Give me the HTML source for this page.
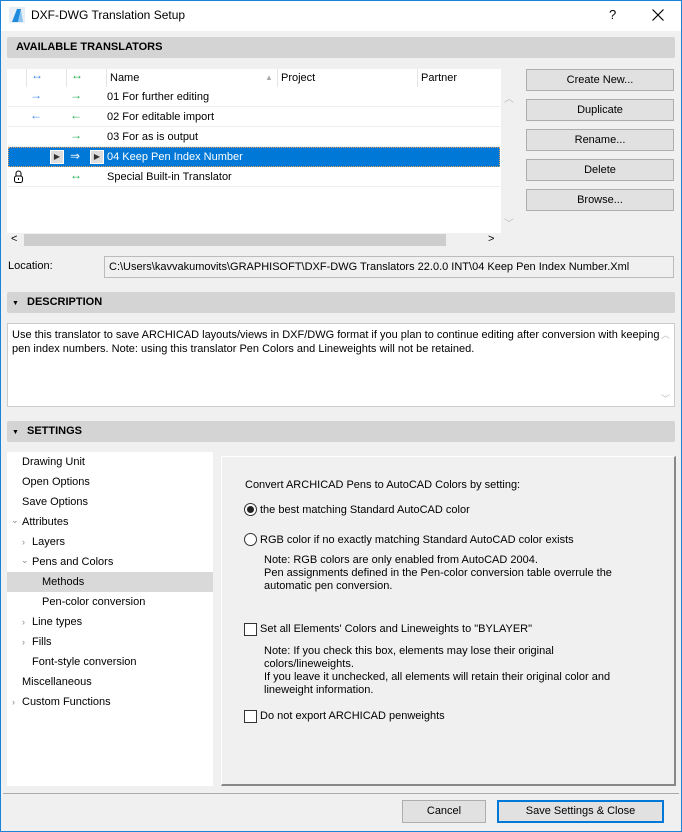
<!DOCTYPE html>
<html><head><style>
*{box-sizing:border-box;margin:0;padding:0}
body{width:682px;height:832px;overflow:hidden;background:#f0f0f0;font-family:"Liberation Sans",sans-serif;font-size:11px;color:#000;position:relative}
.a{position:absolute;white-space:nowrap}
.win{position:absolute;left:0;top:0;width:682px;height:832px;border:1px solid #1883d7}
.hdr{position:absolute;left:7px;width:668px;height:21px;background:#d4d4d4;border-radius:2px;font-weight:bold;font-size:11px;line-height:21px;padding-left:9px}
.btn{position:absolute;left:526px;width:148px;height:22px;background:#e1e1e1;border:1px solid #adadad;text-align:center;line-height:20px}
.row{position:absolute;left:8px;width:492px;height:20px;border-bottom:1px solid #eee;line-height:20px}
.bl{color:#3a86e8;position:absolute;font-size:12px;top:-2px}
.gr{color:#1faa4a;position:absolute;font-size:12px;top:-2px}
.tr{position:absolute;line-height:20px}
.ch{position:absolute;color:#888;font-size:9px;line-height:20px}
</style></head><body>
<div class="win"></div>
<div class="a" style="left:1px;top:1px;width:680px;height:30px;background:#fff"></div>
<svg class="a" style="left:9px;top:7px" width="16" height="16"><rect width="16" height="16" fill="#e8eef5"/><path d="M3 15 L8 2 L12 2 L9 15Z" fill="#1e8be0"/><path d="M9 15 L12 3 L14 15Z" fill="#8cc6f0"/></svg>
<div class="a" style="left:31px;top:8px;font-size:12px">DXF-DWG Translation Setup</div>
<div class="a" style="left:609px;top:7px;font-size:13px">?</div>
<svg class="a" style="left:652px;top:9px" width="12" height="12"><path d="M0.5 0.5L11.5 11.5M11.5 0.5L0.5 11.5" stroke="#000" stroke-width="1.2"/></svg>

<div class="hdr" style="top:37px">AVAILABLE TRANSLATORS</div>
<div class="a" style="left:7px;top:69px;width:494px;height:164px;background:#fff"></div>
<div class="a" style="left:26px;top:69px;width:1px;height:18px;background:#e5e5e5"></div>
<div class="a" style="left:66px;top:69px;width:1px;height:18px;background:#e5e5e5"></div>
<div class="a" style="left:106px;top:69px;width:1px;height:18px;background:#e5e5e5"></div>
<div class="a" style="left:277px;top:69px;width:1px;height:18px;background:#e5e5e5"></div>
<div class="a" style="left:417px;top:69px;width:1px;height:18px;background:#e5e5e5"></div>
<div class="bl" style="left:31px;top:68px">↔</div><div class="gr" style="left:71px;top:68px">↔</div>
<div class="a" style="left:110px;top:72px">Name</div><div class="a" style="left:265px;top:73px;color:#aaa;font-size:8px">▲</div>
<div class="a" style="left:281px;top:72px">Project</div><div class="a" style="left:421px;top:72px">Partner</div>
<div class="row" style="top:87px"><span class="bl" style="left:22px">→</span><span class="gr" style="left:62px">→</span><span class="tr" style="left:99px">01 For further editing</span></div>
<div class="row" style="top:107px"><span class="bl" style="left:22px">←</span><span class="gr" style="left:62px">←</span><span class="tr" style="left:99px">02 For editable import</span></div>
<div class="row" style="top:127px"><span class="gr" style="left:62px">→</span><span class="tr" style="left:99px">03 For as is output</span></div>
<div class="row" style="top:147px;background:#0078d7;color:#fff;border:1px dotted #e0a060">
<span style="position:absolute;left:41px;top:2px;width:14px;height:14px;background:#ddd;border:1px solid #fff;color:#333;font-size:8px;line-height:12px;text-align:center">▶</span>
<span style="position:absolute;left:61px;top:-2px;color:#fff;font-size:12px">⇒</span>
<span style="position:absolute;left:81px;top:2px;width:14px;height:14px;background:#ddd;border:1px solid #fff;color:#333;font-size:8px;line-height:12px;text-align:center">▶</span>
<span class="tr" style="left:98px;top:-1px">04 Keep Pen Index Number</span></div>
<div class="row" style="top:167px"><svg style="position:absolute;left:5px;top:3px" width="11" height="13"><path d="M3 6V3.5a2.5 2.5 0 0 1 5 0V6" fill="none" stroke="#000"/><rect x="1.5" y="6" width="8" height="6.5" rx="2" fill="#fff" stroke="#000"/><path d="M5.5 8v2" stroke="#000"/></svg><span class="gr" style="left:62px">↔</span><span class="tr" style="left:99px">Special Built-in Translator</span></div>
<div class="a" style="left:504px;top:90px;color:#bbb;font-size:10px">︿</div>
<div class="a" style="left:504px;top:215px;color:#bbb;font-size:10px">﹀</div>
<div class="a" style="left:24px;top:234px;width:422px;height:12px;background:#cdcdcd"></div>
<div class="a" style="left:11px;top:233px;font-size:11px">&lt;</div><div class="a" style="left:488px;top:233px;font-size:11px">&gt;</div>

<div class="btn" style="top:69px">Create New...</div>
<div class="btn" style="top:99px">Duplicate</div>
<div class="btn" style="top:129px">Rename...</div>
<div class="btn" style="top:159px">Delete</div>
<div class="btn" style="top:189px">Browse...</div>

<div class="a" style="left:8px;top:260px">Location:</div>
<div class="a" style="left:104px;top:256px;width:570px;height:22px;border:1px solid #bbb;background:#f0f0f0;padding-left:4px;line-height:20px">C:\Users\kavvakumovits\GRAPHISOFT\DXF-DWG Translators 22.0.0 INT\04 Keep Pen Index Number.Xml</div>

<div class="hdr" style="top:292px;padding-left:20px">DESCRIPTION</div>
<div class="a" style="left:12px;top:300px;font-size:7px">▼</div>
<div class="a" style="left:7px;top:323px;width:668px;height:84px;background:#fff;border:1px solid #ccc;padding:4px 4px;white-space:normal;line-height:14px">Use this translator to save ARCHICAD layouts/views in DXF/DWG format if you plan to continue editing after conversion with keeping pen index numbers. Note: using this translator Pen Colors and Lineweights will not be retained.</div>
<div class="a" style="left:661px;top:328px;color:#bbb;font-size:9px">︿</div>
<div class="a" style="left:661px;top:392px;color:#bbb;font-size:9px">﹀</div>

<div class="hdr" style="top:421px;padding-left:20px">SETTINGS</div>
<div class="a" style="left:12px;top:429px;font-size:7px">▼</div>
<div class="a" style="left:7px;top:452px;width:206px;height:334px;background:#fff"></div>
<div class="a" style="left:7px;top:572px;width:206px;height:20px;background:#d9d9d9"></div>
<div class="a" style="left:22px;top:452px;line-height:20px">Drawing Unit<br>Open Options<br>Save Options<br>Attributes</div>
<div class="a" style="left:32px;top:532px;line-height:20px">Layers<br>Pens and Colors</div>
<div class="a" style="left:42px;top:572px;line-height:20px">Methods<br>Pen-color conversion</div>
<div class="a" style="left:32px;top:612px;line-height:20px">Line types<br>Fills<br>Font-style conversion</div>
<div class="a" style="left:22px;top:672px;line-height:20px">Miscellaneous<br>Custom Functions</div>
<div class="ch" style="left:11px;top:510px">⌄</div>
<div class="ch" style="left:22px;top:532px">›</div>
<div class="ch" style="left:21px;top:550px">⌄</div>
<div class="ch" style="left:22px;top:612px">›</div>
<div class="ch" style="left:22px;top:632px">›</div>
<div class="ch" style="left:12px;top:692px">›</div>

<div class="a" style="left:221px;top:456px;width:455px;height:330px;border:1px solid #fff;border-right:2px solid #888;border-bottom:2px solid #888"></div>
<div class="a" style="left:245px;top:479px">Convert ARCHICAD Pens to AutoCAD Colors by setting:</div>
<div class="a" style="left:244px;top:503px;width:13px;height:13px;border:1px solid #333;border-radius:50%;background:#fff"><div style="margin:2px;width:7px;height:7px;border-radius:50%;background:#222"></div></div>
<div class="a" style="left:260px;top:504px">the best matching Standard AutoCAD color</div>
<div class="a" style="left:244px;top:533px;width:13px;height:13px;border:1px solid #333;border-radius:50%;background:#fff"></div>
<div class="a" style="left:260px;top:534px">RGB color if no exactly matching Standard AutoCAD color exists</div>
<div class="a" style="left:264px;top:554px;line-height:13px">Note: RGB colors are only enabled from AutoCAD 2004.<br>Pen assignments defined in the Pen-color conversion table overrule the<br>automatic pen conversion.</div>
<div class="a" style="left:244px;top:623px;width:13px;height:13px;border:1px solid #333;background:#fff"></div>
<div class="a" style="left:260px;top:623px">Set all Elements' Colors and Lineweights to "BYLAYER"</div>
<div class="a" style="left:264px;top:645px;line-height:13px">Note: If you check this box, elements may lose their original<br>colors/lineweights.<br>If you leave it unchecked, all elements will retain their original color and<br>lineweight information.</div>
<div class="a" style="left:244px;top:710px;width:13px;height:13px;border:1px solid #333;background:#fff"></div>
<div class="a" style="left:260px;top:710px">Do not export ARCHICAD penweights</div>

<div class="a" style="left:3px;top:793px;width:676px;height:1px;background:#aaa"></div>
<div class="a" style="left:402px;top:800px;width:84px;height:23px;background:#e1e1e1;border:1px solid #adadad;text-align:center;line-height:21px">Cancel</div>
<div class="a" style="left:497px;top:800px;width:167px;height:23px;background:#e1e1e1;border:2px solid #0078d7;text-align:center;line-height:19px">Save Settings &amp; Close</div>
</body></html>
